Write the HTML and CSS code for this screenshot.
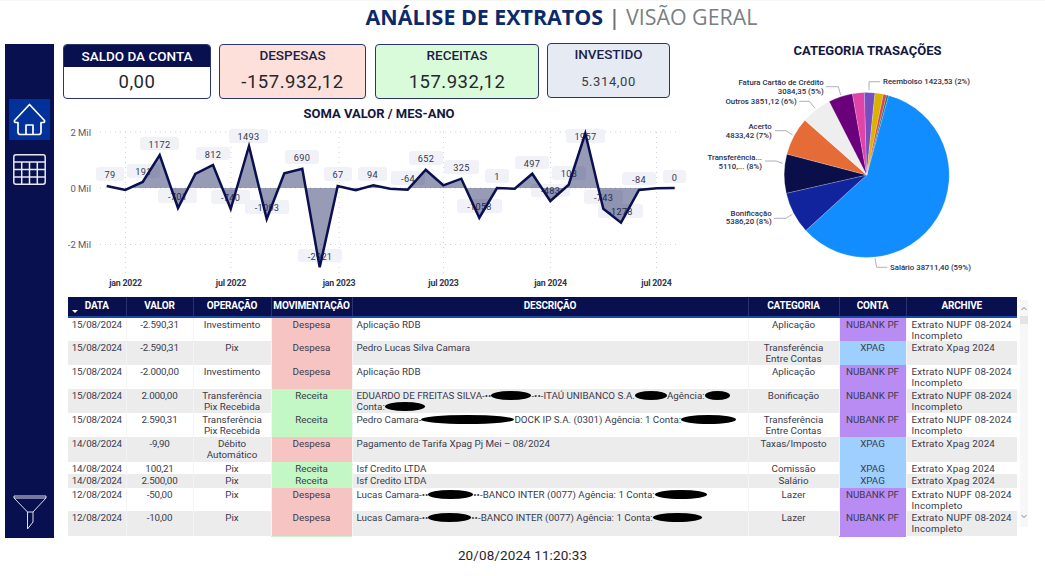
FILE: index.html
```html
<!DOCTYPE html>
<html lang="pt-BR">
<head>
<meta charset="utf-8">
<title>Análise de Extratos</title>
<link rel="stylesheet" href="styles.css">
</head>
<body>
<div class="page">
  <header class="head">
    <h1 class="title"><strong>ANÁLISE DE EXTRATOS</strong> <span class="bar">|</span> <span class="sub">VISÃO GERAL</span></h1>
  </header>
  <main class="main">
    <nav class="side">
      <div class="nav-home">
        <svg viewBox="0 0 41 41" width="41" height="41"><path class="ico" d="M5.5 21.5 L20.5 5.5 L35.5 21.5 Q36 23.5 34 23.5 H32 V33 Q32 35.5 29.5 35.5 H11.5 Q9 35.5 9 33 V23.5 H7 Q5 23.5 5.5 21.5 Z M17 35.5 V26 H24 V35.5"/></svg>
      </div>
      <div class="nav-table">
        <svg viewBox="0 0 33 31" width="33" height="31"><path class="ico-thin" d="M3 .8 H30 Q32.2 .8 32.2 3 V28 Q32.2 30.2 30 30.2 H3 Q.8 30.2 .8 28 V3 Q.8 .8 3 .8 Z M.8 8 H32.2 M.8 15.5 H32.2 M.8 23 H32.2 M8.7 8 V30 M16.5 8 V30 M24.3 8 V30"/></svg>
      </div>
      <div class="nav-filter">
        <svg viewBox="0 0 34 35" width="34" height="35"><path class="ico-slim" d="M1 1 H33 V3 L20 17 H14.5 L1 3 Z M1 3 H33 M14.5 17 V34 L20 27 V17"/></svg>
      </div>
    </nav>
    <div class="content">
      <section class="top">
        <div class="left">
          <div class="cards">
            <div class="card card-saldo">
              <div class="card-band">SALDO DA CONTA</div>
              <div class="card-value">0,00</div>
            </div>
            <div class="card card-desp">
              <div class="card-label">DESPESAS</div>
              <div class="card-value">-157.932,12</div>
            </div>
            <div class="card card-rec">
              <div class="card-label">RECEITAS</div>
              <div class="card-value">157.932,12</div>
            </div>
            <div class="card card-inv">
              <div class="card-label">INVESTIDO</div>
              <div class="card-value small">5.314,00</div>
            </div>
          </div>
          <h2 class="chart-title">SOMA VALOR / MES-ANO</h2>
          <svg class="chart" viewBox="68 122 620 175" width="620" height="175">
            <g class="grid">
              <path d="M100 132 H680 M100 188 H680 M100 244.5 H680 M125.500 132 V273 M231 132 V273 M339 132 V273 M443.500 132 V273 M550.500 132 V273 M656.500 132 V273"/>
            </g>
            <g class="axis">
              <text x="91" y="135.500">2 Mil</text>
              <text x="91" y="191.500">0 Mil</text>
              <text x="91" y="248">-2 Mil</text>
            </g>
            <g class="xaxis">
              <text x="125.500" y="286">jan 2022</text>
              <text x="231" y="286">jul 2022</text>
              <text x="339" y="286">jan 2023</text>
              <text x="443.500" y="286">jul 2023</text>
              <text x="550.500" y="286">jan 2024</text>
              <text x="656.500" y="286">jul 2024</text>
            </g>
            <g class="pills">
              <rect x="96" y="167" width="28" height="14" rx="3"/>
              <rect x="127" y="164" width="33" height="14" rx="3"/>
              <rect x="140" y="137" width="39" height="13" rx="3"/>
              <rect x="158" y="189" width="39" height="14" rx="3"/>
              <rect x="196" y="147" width="34" height="13" rx="3"/>
              <rect x="211" y="190" width="39" height="14" rx="3"/>
              <rect x="229" y="129" width="39" height="14" rx="3"/>
              <rect x="245" y="200" width="44" height="14" rx="3"/>
              <rect x="285" y="150" width="34" height="14" rx="3"/>
              <rect x="298" y="249" width="44" height="13" rx="3"/>
              <rect x="324" y="167" width="28" height="14" rx="3"/>
              <rect x="358" y="167" width="29" height="14" rx="3"/>
              <rect x="391" y="171" width="34" height="14" rx="3"/>
              <rect x="409" y="151" width="34" height="14" rx="3"/>
              <rect x="444" y="160" width="35" height="14" rx="3"/>
              <rect x="457" y="199" width="45" height="14" rx="3"/>
              <rect x="485" y="169" width="24" height="14" rx="3"/>
              <rect x="515" y="156" width="34" height="13" rx="3"/>
              <rect x="531" y="184" width="39" height="13" rx="3"/>
              <rect x="552" y="166" width="34" height="14" rx="3"/>
              <rect x="566" y="129" width="39" height="14" rx="3"/>
              <rect x="584" y="190" width="39" height="14" rx="3"/>
              <rect x="598" y="204" width="45" height="14" rx="3"/>
              <rect x="622" y="172" width="34" height="13" rx="3"/>
              <rect x="663" y="170" width="23" height="13" rx="3"/>
            </g>
            <g class="vals">
              <text x="110" y="178">79</text>
              <text x="143.500" y="175">191</text>
              <text x="159.500" y="147.500">1172</text>
              <text x="177.500" y="200">-701</text>
              <text x="213" y="157.500">812</text>
              <text x="230.500" y="201">-740</text>
              <text x="248.500" y="140">1493</text>
              <text x="267" y="211">-1093</text>
              <text x="302" y="161">690</text>
              <text x="320" y="259.500">-2921</text>
              <text x="338" y="178">67</text>
              <text x="372.500" y="177.500">94</text>
              <text x="408" y="182">-64</text>
              <text x="426" y="162">652</text>
              <text x="461.500" y="171">325</text>
              <text x="479.500" y="210">-1058</text>
              <text x="497" y="180">1</text>
              <text x="532" y="166.500">497</text>
              <text x="550.500" y="194">-483</text>
              <text x="569" y="177">103</text>
              <text x="585.500" y="140">1957</text>
              <text x="603.500" y="201">-743</text>
              <text x="620.500" y="215">-1278</text>
              <text x="639" y="182.500">-84</text>
              <text x="674.500" y="180.500">0</text>
            </g>
            <polygon class="area" points="125.300,188 125.300,190 142.700,182 159.700,155 178,208 195.300,174 213,165 230.700,209 249,146 266.700,219 284.300,173.300 302.300,168.700 319.700,267.300 337.700,186 355.700,190.300 373.300,185.300 390,188.700 407.700,189.700 425.700,169.700 443.300,185.300 461.300,178.700 479.300,217.700 497,188 514.700,188.700 532.300,173.700 550.300,201 568.700,184.700 585.300,133.300 603.300,208.700 621,222.700 639,190 656.700,188.300 674.700,188"/>
            <polyline class="line" points="106.700,186 125.300,190 142.700,182 159.700,155 178,208 195.300,174 213,165 230.700,209 249,146 266.700,219 284.300,173.300 302.300,168.700 319.700,267.300 337.700,186 355.700,190.300 373.300,185.300 390,188.700 407.700,189.700 425.700,169.700 443.300,185.300 461.300,178.700 479.300,217.700 497,188 514.700,188.700 532.300,173.700 550.300,201 568.700,184.700 585.300,133.300 603.300,208.700 621,222.700 639,190 656.700,188.300 674.700,188"/>
          </svg>
        </div>
        <div class="right">
          <h2 class="pie-title">CATEGORIA TRASAÇÕES</h2>
          <svg class="pie" viewBox="690 66 355 231" width="355" height="231">
            <g transform="translate(866.700 175)">
              <path class="s-sal" d="M0 0 L21.800 -79.600 A82.500 82.500 0 1 1 -60.900 55.600 Z"/>
              <path class="s-bon" d="M0 0 L-60.900 55.600 A82.500 82.500 0 0 1 -80.400 18.300 Z"/>
              <path class="s-tra" d="M0 0 L-80.400 18.300 A82.500 82.500 0 0 1 -79.800 -20.900 Z"/>
              <path class="s-ace" d="M0 0 L-79.800 -20.900 A82.500 82.500 0 0 1 -61.800 -54.700 Z"/>
              <path class="s-out" d="M0 0 L-61.800 -54.700 A82.500 82.500 0 0 1 -37.500 -73.500 Z"/>
              <path class="s-fat" d="M0 0 L-37.500 -73.500 A82.500 82.500 0 0 1 -14.300 -81.200 Z"/>
              <path class="s-pin" d="M0 0 L-14.300 -81.200 A82.500 82.500 0 0 1 -2.300 -82.500 Z"/>
              <path class="s-ree" d="M0 0 L-2.300 -82.500 A82.500 82.500 0 0 1 8.300 -82.100 Z"/>
              <path class="s-yel" d="M0 0 L8.300 -82.100 A82.500 82.500 0 0 1 16.700 -80.800 Z"/>
              <path class="s-red" d="M0 0 L16.700 -80.800 A82.500 82.500 0 0 1 20 -80 Z"/>
              <path class="s-tea" d="M0 0 L20 -80 A82.500 82.500 0 0 1 21.800 -79.600 Z"/>
            </g>
            <g class="leaders">
              <polyline points="869,90 869,81.700 880,81.700"/>
              <polyline points="826,86.700 838.300,86.700 840.700,95"/>
              <polyline points="799.300,101.300 809.300,101.300 815,108.300"/>
              <polyline points="775,130.700 786,130.700 792.700,135"/>
              <polyline points="765,161 776,161 782.700,163.300"/>
              <polyline points="774,218.300 786,218.300 792.300,214.300"/>
              <polyline points="875,258.300 876.700,267.300 887.300,267.300"/>
            </g>
            <g class="pie-lab">
              <text class="st" x="883" y="84">Reembolso 1423,53 (2%)</text>
              <text x="823.700" y="85">Fatura Cartão de Crédito</text>
              <text x="823.700" y="93.500">3084,35 (5%)</text>
              <text x="796.700" y="104">Outros 3851,12 (6%)</text>
              <text x="771.700" y="129">Acerto</text>
              <text x="771.700" y="137.500">4833,42 (7%)</text>
              <text x="762" y="160">Transferência...</text>
              <text x="762" y="168.700">5110,... (8%)</text>
              <text x="771.700" y="215.700">Bonificação</text>
              <text x="771.700" y="224.300">5386,20 (8%)</text>
              <text class="st" x="890" y="269.700">Salário 38711,40 (59%)</text>
            </g>
          </svg>
        </div>
      </section>
      <section class="table-wrap">
        <table class="tbl">
          <colgroup>
            <col class="c1"><col class="c2"><col class="c3"><col class="c4"><col class="c5"><col class="c6"><col class="c7"><col class="c8">
          </colgroup>
          <thead>
            <tr>
              <th class="sorted">DATA</th><th>VALOR</th><th>OPERAÇÃO</th><th>MOVIMENTAÇÃO</th><th>DESCRIÇÃO</th><th>CATEGORIA</th><th>CONTA</th><th>ARCHIVE</th>
            </tr>
          </thead>
          <tbody>
            <tr class="h22">
              <td class="num">15/08/2024</td><td class="num">-2.590,31</td><td>Investimento</td><td class="desp">Despesa</td><td class="txt">Aplicação RDB</td><td>Aplicação</td><td class="nu">NUBANK PF</td><td class="arc">Extrato NUPF 08-2024 Incompleto</td>
            </tr>
            <tr class="h24 alt">
              <td class="num">15/08/2024</td><td class="num">-2.590,31</td><td>Pix</td><td class="desp">Despesa</td><td class="txt">Pedro Lucas Silva Camara</td><td>Transferência<br>Entre Contas</td><td class="xp">XPAG</td><td class="arc">Extrato Xpag 2024</td>
            </tr>
            <tr class="h24">
              <td class="num">15/08/2024</td><td class="num">-2.000,00</td><td>Investimento</td><td class="desp">Despesa</td><td class="txt">Aplicação RDB</td><td>Aplicação</td><td class="nu">NUBANK PF</td><td class="arc">Extrato NUPF 08-2024 Incompleto</td>
            </tr>
            <tr class="h24 alt">
              <td class="num">15/08/2024</td><td class="num">2.000,00</td><td>Transferência<br>Pix Recebida</td><td class="rec">Receita</td><td class="txt">EDUARDO DE FREITAS SILVA-••<span class="blob b40"></span>-••-ITAÚ UNIBANCO S.A.<span class="blob b32"></span>Agência:<span class="blob b25"></span><br>Conta:<span class="blob b40"></span></td><td>Bonificação</td><td class="nu">NUBANK PF</td><td class="arc">Extrato NUPF 08-2024 Incompleto</td>
            </tr>
            <tr class="h24">
              <td class="num">15/08/2024</td><td class="num">2.590,31</td><td>Transferência<br>Pix Recebida</td><td class="rec">Receita</td><td class="txt">Pedro Camara-<span class="blob b93"></span>DOCK IP S.A. (0301) Agência: 1 Conta:<span class="blob b55"></span></td><td>Transferência<br>Entre Contas</td><td class="nu">NUBANK PF</td><td class="arc">Extrato NUPF 08-2024 Incompleto</td>
            </tr>
            <tr class="h25 alt">
              <td class="num">14/08/2024</td><td class="num">-9,90</td><td>Débito<br>Automático</td><td class="desp">Despesa</td><td class="txt">Pagamento de Tarifa Xpag Pj Mei – 08/2024</td><td>Taxas/Imposto</td><td class="xp">XPAG</td><td class="arc">Extrato Xpag 2024</td>
            </tr>
            <tr class="h12">
              <td class="num">14/08/2024</td><td class="num">100,21</td><td>Pix</td><td class="rec">Receita</td><td class="txt">Isf Credito LTDA</td><td>Comissão</td><td class="xp">XPAG</td><td class="arc">Extrato Xpag 2024</td>
            </tr>
            <tr class="h14 alt">
              <td class="num">14/08/2024</td><td class="num">2.500,00</td><td>Pix</td><td class="rec">Receita</td><td class="txt">Isf Credito LTDA</td><td>Salário</td><td class="xp">XPAG</td><td class="arc">Extrato Xpag 2024</td>
            </tr>
            <tr class="h22">
              <td class="num">12/08/2024</td><td class="num">-50,00</td><td>Pix</td><td class="desp">Despesa</td><td class="txt">Lucas Camara-••<span class="blob b45"></span>••-BANCO INTER (0077) Agência: 1 Conta:<span class="blob b52"></span></td><td>Lazer</td><td class="nu">NUBANK PF</td><td class="arc">Extrato NUPF 08-2024 Incompleto</td>
            </tr>
            <tr class="h25 alt">
              <td class="num">12/08/2024</td><td class="num">-10,00</td><td>Pix</td><td class="desp">Despesa</td><td class="txt">Lucas Camara-••<span class="blob b43"></span>••-BANCO INTER (0077) Agência: 1 Conta:<span class="blob b49"></span></td><td>Lazer</td><td class="nu">NUBANK PF</td><td class="arc">Extrato NUPF 08-2024 Incompleto</td>
            </tr>
            <tr class="sliver">
              <td></td><td></td><td></td><td class="rec"></td><td></td><td></td><td class="nu"></td><td></td>
            </tr>
          </tbody>
        </table>
        <div class="scroll">
          <svg class="arrow" viewBox="0 0 8 5" width="8" height="5"><path d="M1.500 4 L4 1.500 L6.500 4"/></svg>
          <div class="thumb"></div>
          <svg class="arrow down" viewBox="0 0 8 5" width="8" height="5"><path d="M1.500 1 L4 3.500 L6.500 1"/></svg>
        </div>
      </section>
    </div>
  </main>
  <footer class="foot">20/08/2024 11:20:33</footer>
</div>
</body>
</html>
```
FILE: styles.css
```css
* { box-sizing: border-box; }
html, body { margin: 0; padding: 0; background: #fff; }
body { font-family: Roboto, "Liberation Sans", sans-serif; color: #2b2d42; }
.page { width: 1045px; height: 576px; overflow: hidden; display: flex; flex-direction: column; border-top: 1px solid #f7f7f7; }

.head { height: 43px; padding-left: 78px; text-align: center; }
.title { margin: 0; font-family: "Open Sans", sans-serif; font-size: 21.400px; line-height: 32px; font-weight: 400; color: #7a7f85; white-space: nowrap; }
.title strong { font-weight: 700; color: #0b2a6b; }
.title .bar { font-weight: 600; color: #6b6f76; }

.main { display: flex; height: 494px; flex: none; }
.side { width: 49px; margin-left: 5px; flex: none; background: #08104f; display: flex; flex-direction: column; align-items: center; padding: 55px 0 8px; }
.nav-home { width: 41px; height: 41px; background: #00329a; }
.nav-home svg, .nav-table svg, .nav-filter svg { display: block; }
.nav-table { margin-top: 14px; }
.nav-filter { margin-top: auto; }
.ico { fill: none; stroke: #fff; stroke-width: 1.700; stroke-linejoin: round; }
.ico-thin { fill: none; stroke: #e8e9f2; stroke-width: 1.500; }
.ico-slim { fill: none; stroke: #dfe0ea; stroke-width: 1; }

.content { flex: 1; min-width: 0; display: flex; flex-direction: column; }
.top { display: flex; height: 253px; flex: none; }
.left { width: 636px; flex: none; }
.right { width: 355px; flex: none; }

.cards { display: flex; gap: 8px; padding-left: 9px; height: 55px; }
.card { border: 1px solid #2c3569; border-radius: 4px; height: 55px; text-align: center; overflow: hidden; color: #1c1f4a; }
.card-saldo { width: 148px; background: #fff; }
.card-desp { width: 147px; background: #fde0da; }
.card-rec { width: 164px; background: #d9fbd9; margin-left: 1px; }
.card-inv { width: 123px; background: #e6eaf2; margin-top: -1px; }
.card-band { height: 22px; background: #08104f; color: #fff; font-size: 13.500px; font-weight: 500; line-height: 22px; letter-spacing: 0; }
.card-label { font-size: 13.500px; font-weight: 500; line-height: 16px; padding-top: 2px; height: 22px; letter-spacing: 0; }
.card-value { font-size: 18.500px; line-height: 31px; letter-spacing: .5px; color: #26262e; }
.card-value.small { font-size: 13px; letter-spacing: .6px; color: #3a3a46; }

.chart-title { margin: 0; height: 23px; padding-left: 28px; font-size: 13px; line-height: 29px; font-weight: 700; text-align: center; color: #14173f; width: 622px; }
.chart { display: block; margin-left: 14px; }
.grid path { fill: none; stroke: #d2d3da; stroke-width: 1; stroke-dasharray: 1 4; }
.axis text { font-size: 9.500px; fill: #555a6e; text-anchor: end; }
.xaxis text { font-size: 8.800px; font-weight: 700; fill: #333650; text-anchor: middle; letter-spacing: -.2px; }
.pills rect { fill: #f1f2f7; }
.vals text { font-size: 9.200px; fill: #34374f; text-anchor: middle; letter-spacing: .3px; }
.area { fill: #0a104f; fill-opacity: .42; }
.line { fill: none; stroke: #0a104f; stroke-width: 2.500; stroke-linejoin: miter; }

.pie-title { margin: 0; height: 22px; font-size: 13px; line-height: 14px; font-weight: 700; text-align: center; color: #14173f; }
.pie { display: block; }
.pie path { stroke: #fff; stroke-width: .2; }
.s-sal { fill: #118dff; }
.s-bon { fill: #12239e; }
.s-tra { fill: #0a0f4a; }
.s-ace { fill: #e66c37; }
.s-out { fill: #eeeeee; }
.s-fat { fill: #6b007b; }
.s-pin { fill: #e044a7; }
.s-ree { fill: #744ec2; }
.s-yel { fill: #d9b300; }
.s-red { fill: #d64550; }
.s-tea { fill: #197278; }
.leaders polyline { fill: none; stroke: #9a9cab; stroke-width: .8; }
.pie-lab text { font-size: 7.800px; font-weight: 500; fill: #2b2d4a; text-anchor: end; }
.pie-lab text.st { text-anchor: start; }

.table-wrap { display: flex; padding-left: 14px; align-items: flex-start; }
.tbl { width: 949px; flex: none; table-layout: fixed; border-collapse: collapse; font-size: 9.800px; line-height: 11px; color: #3a3b4c; }
.c1 { width: 58px; }
.c2 { width: 67px; }
.c3 { width: 78px; }
.c4 { width: 81px; }
.c5 { width: 396px; }
.c6 { width: 91px; }
.c7 { width: 67px; }
.c8 { width: 111px; }
.tbl th { position: relative; height: 20px; padding: 0 0 3px; background: #08104f; color: #fff; font-size: 10px; font-weight: 700; letter-spacing: -.2px; border-right: 1px solid #2a3270; border-bottom: 2px solid #1f4aa0; }
.tbl th:last-child { border-right: 0; }
.sorted::after { content: ""; position: absolute; left: 4px; bottom: 3px; border: 3px solid transparent; border-top: 3px solid #fff; border-bottom: 0; }
.tbl td { padding: 1px 0 0; vertical-align: top; text-align: center; overflow: hidden; white-space: nowrap; border-right: 1px solid #f4f4f4; }
.tbl td:last-child { border-right: 0; }
.alt td { background: #ececec; }
.h22 td { height: 22px; }
.h24 td { height: 24px; }
.h25 td { height: 25px; }
.h12 td { height: 12px; }
.h14 td { height: 14px; }
.tbl .sliver td { height: 1px; padding: 0; border: 0; font-size: 0; line-height: 0; }
.tbl td.num { letter-spacing: -.2px; }
.tbl td.txt { text-align: left; padding-left: 4px; }
.tbl td.arc { text-align: left; padding-left: 5px; white-space: normal; letter-spacing: .2px; }
.tbl td.desp { background: #f7c4c4; }
.tbl td.rec { background: #c3f7c3; }
.tbl td.nu { background: #b88cf2; }
.tbl td.xp { background: #9fcfff; }

.blob { display: inline-block; height: 9px; background: #000; border-radius: 50%; vertical-align: -1px; }
.b25 { width: 25px; }
.b32 { width: 32px; }
.b40 { width: 40px; }
.b43 { width: 43px; }
.b45 { width: 45px; }
.b49 { width: 49px; }
.b52 { width: 52px; }
.b55 { width: 55px; }
.b93 { width: 93px; }

.scroll { width: 8px; height: 227px; margin: 3px 0 0 3px; background: #f7f7f7; display: flex; flex-direction: column; align-items: center; padding-top: 6px; }
.arrow { display: block; }
.arrow path { fill: none; stroke: #777; stroke-width: .9; }
.thumb { width: 8px; height: 8px; background: #e4e4e4; margin-top: 5px; }
.arrow.down { margin-top: auto; margin-bottom: 8px; }

.foot { flex: 1; text-align: center; font-size: 13.500px; line-height: 34px; color: #26262e; letter-spacing: .1px; }
```
